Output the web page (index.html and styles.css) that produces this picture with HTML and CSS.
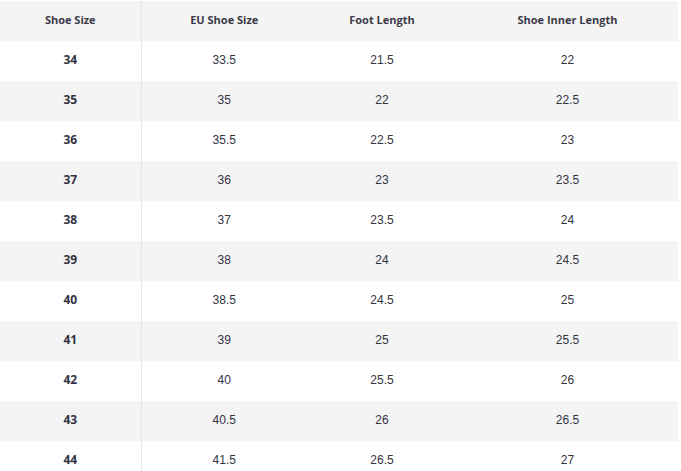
FILE: index.html
```html
<!DOCTYPE html>
<html>
<head>
<meta charset="utf-8">
<link rel="stylesheet" href="styles.css">
</head>
<body>
<table class="size-table">
  <colgroup>
    <col class="c1"><col class="c2"><col class="c3"><col class="c4">
  </colgroup>
  <thead>
    <tr><th>Shoe Size</th><th>EU Shoe Size</th><th>Foot Length</th><th>Shoe Inner Length</th></tr>
  </thead>
  <tbody>
    <tr><td>34</td><td>33.5</td><td>21.5</td><td>22</td></tr>
    <tr><td>35</td><td>35</td><td>22</td><td>22.5</td></tr>
    <tr><td>36</td><td>35.5</td><td>22.5</td><td>23</td></tr>
    <tr><td>37</td><td>36</td><td>23</td><td>23.5</td></tr>
    <tr><td>38</td><td>37</td><td>23.5</td><td>24</td></tr>
    <tr><td>39</td><td>38</td><td>24</td><td>24.5</td></tr>
    <tr><td>40</td><td>38.5</td><td>24.5</td><td>25</td></tr>
    <tr><td>41</td><td>39</td><td>25</td><td>25.5</td></tr>
    <tr><td>42</td><td>40</td><td>25.5</td><td>26</td></tr>
    <tr><td>43</td><td>40.5</td><td>26</td><td>26.5</td></tr>
    <tr><td>44</td><td>41.5</td><td>26.5</td><td>27</td></tr>
  </tbody>
</table>
</body>
</html>
```
FILE: styles.css
```css
html, body {
  margin: 0;
  padding: 0;
  background: #ffffff;
}
body {
  padding-top: 1px;
  font-family: "Liberation Sans", Arial, sans-serif;
  color: #33333f;
}
.size-table {
  width: 678px;
  border-collapse: collapse;
  table-layout: fixed;
}
.c1 { width: 141px; }
.c2 { width: 166px; }
.c3 { width: 150px; }
.c4 { width: 221px; }
.size-table th,
.size-table td {
  height: 40px;
  padding: 0 0 2px;
  box-sizing: border-box;
  text-align: center;
  vertical-align: middle;
  line-height: 14px;
}
.size-table th {
  font-family: "Open Sans", "Liberation Sans", sans-serif;
  font-weight: 700;
  font-size: 11px;
  color: #3a3a48;
  background: #f4f4f4;
}
.size-table td {
  font-size: 12px;
}
.size-table tbody tr:nth-child(even) td {
  background: #f4f4f4;
}
.size-table td:first-child {
  font-family: "Open Sans", "Liberation Sans", sans-serif;
  font-weight: 700;
  font-size: 12px;
}
.size-table th:first-child,
.size-table td:first-child {
  border-right: 1px solid #e6e6e6;
}
```
